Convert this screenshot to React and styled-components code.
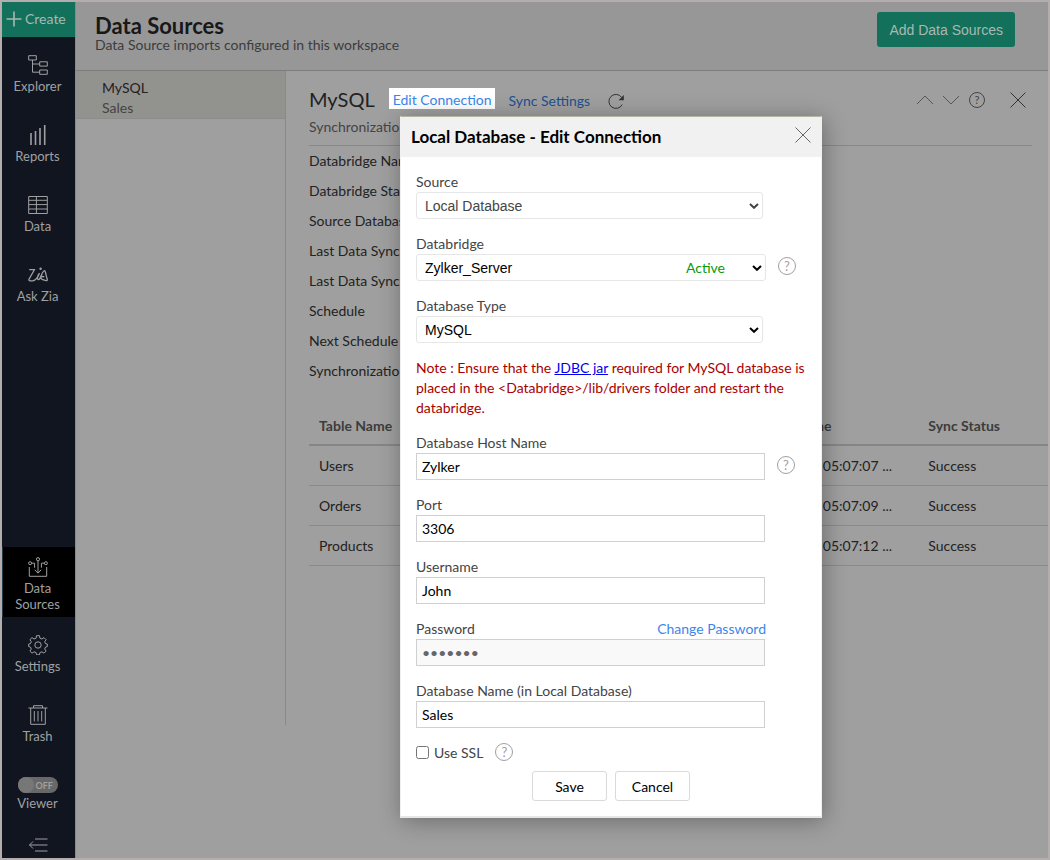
import { useState } from 'react';
import styled, { createGlobalStyle } from 'styled-components';

const tables = [
	{ name: 'Users', time: '19 Apr, 2021 05:07:07 ...', status: 'Success' },
	{ name: 'Orders', time: '19 Apr, 2021 05:07:09 ...', status: 'Success' },
	{ name: 'Products', time: '19 Apr, 2021 05:07:12 ...', status: 'Success' },
];

const details = [
	'Databridge Name',
	'Databridge Status',
	'Source Database',
	'Last Data Sync Time',
	'Last Data Sync Status',
	'Schedule',
	'Next Schedule Time',
	'Synchronization Type',
];

const PlusIcon = () => (
	<Icon width='16' height='16' viewBox='0 0 16 16' strokeWidth='1.6'>
		<path d='M8 0.5v15M0.5 8h15' />
	</Icon>
);

const ExplorerIcon = () => (
	<Icon width='20' height='20' viewBox='0 0 20 20'>
		<path d='M0.7 0.7h7.6v4.3H0.7zM11.7 6.8h7.6v4.3h-7.6zM11.7 15h7.6v4.3h-7.6zM4.5 5v12.2h7.2M4.5 9h7.2' />
	</Icon>
);

const ReportsIcon = () => (
	<Icon width='20' height='20' viewBox='0 0 20 20' strokeWidth='1.6'>
		<path d='M3 20V8M7.5 20V6M12 20V3M16.7 20V0' />
	</Icon>
);

const DataIcon = () => (
	<Icon width='20' height='20' viewBox='0 0 20 20'>
		<path d='M0.7 1.5h18.6v17H0.7zM0.7 5.3h18.6M0.7 9.6h18.6M0.7 14h18.6M8.4 1.5v17' />
	</Icon>
);

const ZiaIcon = () => (
	<Icon width='20' height='20' viewBox='0 0 20 20' strokeWidth='1.3'>
		<path d='M1.200 4.700h5.200L1 14.300q-.4 1.500 1.200 1.500h2.600c3-.5 5.600-4.800 6.700-7.600-1.500 1.800-3 5.200-1.300 6.300 2.200 1.200 3.600-8.600 6.300-8.800 1.300.5 1.500 5.500 2.700 8.300.4 1.400-.4 1.900-1.600 1.500-2.200-.7-5.100-1.200-4.900-2.900.3-1.400 2.200-1.300 3.600-.7' />
		<circle cx='12.600' cy='3.700' r='.6' />
	</Icon>
);

const SourcesIcon = () => (
	<Icon width='20' height='20' viewBox='0 0 20 20'>
		<circle cx='10' cy='2.200' r='1.600' />
		<circle cx='2.100' cy='6.200' r='1.500' />
		<circle cx='17.900' cy='6.200' r='1.500' />
		<path d='M10 3.800v12.200M6.800 12.800l3.200 3.400 3.200-3.400M3.600 6.200h3v4.500M16.400 6.200h-3v4.500M1.300 10v9.300h17.400V10' />
	</Icon>
);

const SettingsIcon = () => (
	<Icon width='20' height='20' viewBox='0 0 20 20' strokeLinejoin='round'>
		<circle cx='10' cy='10' r='3.200' />
		<path d='M8.500 0.700h3l.4 2.500 2 .8 2.100-1.400 2.100 2.100-1.400 2.100.8 1.800 1.800.4v2.600l-1.800.5-.8 1.900 1.400 2.100-2.100 2.100-2.100-1.400-2 .8-.4 2.200h-3l-.4-2.200-2-.8L4 18.200l-2.100-2.100L3.300 14l-.8-1.900-1.800-.5V9l1.800-.4.8-1.800-1.400-2.100L4 2.600 6.100 4l2-.8z' />
	</Icon>
);

const TrashIcon = () => (
	<Icon width='20' height='20' viewBox='0 0 20 20'>
		<path d='M0.500 3h19M5.500 3V0.700h9V3M2.700 3v16.300h14.600V3M6.300 6v10.500M10 6v10.500M13.700 6v10.500' />
	</Icon>
);

const CollapseIcon = () => (
	<Icon width='20' height='14' viewBox='0 0 20 14'>
		<path d='M7 1h12.500M1.500 7h18M7 13h12.500M5 3.500L1.500 7 5 10.500' />
	</Icon>
);

const ReloadIcon = () => (
	<Icon width='16' height='16' viewBox='0 0 16 16'>
		<path d='M14.200 11.500A7 7 0 1 1 13.800 4.600' />
		<path d='M15.800 2v5.200h-5.200z' fill='currentColor' stroke='none' />
	</Icon>
);

const CloseIcon = () => (
	<Icon width='16' height='16' viewBox='0 0 16 16'>
		<path d='M0.500 0.500l15 15M15.500 0.500l-15 15' />
	</Icon>
);

const ChevronIcon = ({ up }) => (
	<Icon width='16' height='16' viewBox='0 0 16 16'>
		<path d={up ? 'M0 12l8-8 8 8' : 'M0 4l8 8 8-8'} />
	</Icon>
);

const ArrowIcon = () => (
	<SelectArrow width='10' height='6' viewBox='0 0 10 6' strokeWidth='2'>
		<path d='M1 1l4 3.800L9 1' />
	</SelectArrow>
);

const HelpButton = ({ small }) => (
	<Help type='button' aria-label='Help' $small={small}>
		?
	</Help>
);

const TextField = ({ id, label, value, help, link, ...rest }) => (
	<Field>
		<LabelRow>
			<label htmlFor={id}>{label}</label>
			{link && <TextLink href='#password'>{link}</TextLink>}
		</LabelRow>
		<ControlRow>
			<TextInput id={id} defaultValue={value} {...rest} />
			{help && <HelpButton />}
		</ControlRow>
	</Field>
);

const SelectField = ({ id, label, value, status, disabled }) => (
	<Field>
		<LabelRow>
			<label htmlFor={id}>{label}</label>
		</LabelRow>
		<ControlRow>
			<SelectBox $wide={Boolean(status)} $disabled={disabled}>
				<Select id={id} defaultValue={value} disabled={disabled}>
					<option>{value}</option>
				</Select>
				{status && <Status>{status}</Status>}
				<ArrowIcon />
			</SelectBox>
			{status && <HelpButton />}
		</ControlRow>
	</Field>
);

const EditConnection = () => {
	const [ssl, setSsl] = useState(false);

	return (
		<Overlay>
			<Dialog role='dialog' aria-labelledby='dialog-title'>
				<DialogHeader>
					<h2 id='dialog-title'>Local Database - Edit Connection</h2>
					<IconButton type='button' aria-label='Close' $color='#666'>
						<CloseIcon />
					</IconButton>
				</DialogHeader>
				<Form onSubmit={e => e.preventDefault()}>
					<SelectField id='source' label='Source' value='Local Database' disabled />
					<SelectField
						id='databridge'
						label='Databridge'
						value='Zylker_Server'
						status='Active'
					/>
					<SelectField id='dbtype' label='Database Type' value='MySQL' />
					<Note>
						Note : Ensure that the <a href='#jdbc'>JDBC jar</a> required for MySQL database is
						placed in the &lt;Databridge&gt;/lib/drivers folder and restart the databridge.
					</Note>
					<TextField id='host' label='Database Host Name' value='Zylker' help />
					<TextField id='port' label='Port' value='3306' />
					<TextField id='username' label='Username' value='John' />
					<TextField
						id='password'
						label='Password'
						type='password'
						value='zylker1'
						link='Change Password'
						disabled
					/>
					<TextField id='dbname' label='Database Name (in Local Database)' value='Sales' />
					<SslRow>
						<Checkbox
							id='ssl'
							type='checkbox'
							checked={ssl}
							onChange={e => setSsl(e.target.checked)}
						/>
						<label htmlFor='ssl'>Use SSL</label>
						<HelpButton />
					</SslRow>
					<Actions>
						<FormButton type='submit'>Save</FormButton>
						<FormButton type='button'>Cancel</FormButton>
					</Actions>
				</Form>
			</Dialog>
		</Overlay>
	);
};

const App = () => (
	<Frame>
		<GlobalStyle />
		<Sidebar>
			<CreateButton type='button'>
				<PlusIcon />
				Create
			</CreateButton>
			<NavItem href='#explorer'>
				<ExplorerIcon />
				Explorer
			</NavItem>
			<NavItem href='#reports'>
				<ReportsIcon />
				Reports
			</NavItem>
			<NavItem href='#data'>
				<DataIcon />
				Data
			</NavItem>
			<NavItem href='#zia'>
				<ZiaIcon />
				Ask Zia
			</NavItem>
			<Spacer />
			<NavItem href='#sources' $active>
				<SourcesIcon />
				Data Sources
			</NavItem>
			<NavItem href='#settings'>
				<SettingsIcon />
				Settings
			</NavItem>
			<NavItem href='#trash'>
				<TrashIcon />
				Trash
			</NavItem>
			<Viewer>
				<Toggle type='button' role='switch' aria-checked='false' aria-labelledby='viewer'>
					<Knob />
					OFF
				</Toggle>
				<span id='viewer'>Viewer</span>
			</Viewer>
			<CollapseButton type='button' aria-label='Collapse sidebar'>
				<CollapseIcon />
			</CollapseButton>
		</Sidebar>
		<Main>
			<Header>
				<div>
					<h1>Data Sources</h1>
					<p>Data Source imports configured in this workspace</p>
				</div>
				<AddButton type='button'>Add Data Sources</AddButton>
			</Header>
			<Body>
				<SourceList>
					<SourceItem href='#mysql'>
						<strong>MySQL</strong>
						<span>Sales</span>
					</SourceItem>
				</SourceList>
				<Detail>
					<DetailHeader>
						<TitleRow>
							<h2>MySQL</h2>
							<HighlightLink href='#edit'>Edit Connection</HighlightLink>
							<SyncTools>
								<SyncLink href='#sync'>Sync Settings</SyncLink>
								<IconButton type='button' aria-label='Refresh' $color='#333'>
									<ReloadIcon />
								</IconButton>
							</SyncTools>
							<Tools>
								<IconButton type='button' aria-label='Previous' $color='#555'>
									<ChevronIcon up />
								</IconButton>
								<IconButton type='button' aria-label='Next' $color='#555'>
									<ChevronIcon />
								</IconButton>
								<HelpButton small />
								<IconButton type='button' aria-label='Close' $color='#333' $spaced>
									<CloseIcon />
								</IconButton>
							</Tools>
						</TitleRow>
						<p>Synchronization</p>
					</DetailHeader>
					<DetailList>
						{details.map(item => (
							<li key={item}>{item}</li>
						))}
					</DetailList>
					<Table>
						<colgroup>
							<col width='56%' />
							<col width='27%' />
							<col />
						</colgroup>
						<thead>
							<tr>
								<th>Table Name</th>
								<th>Last Sync Time</th>
								<th>Sync Status</th>
							</tr>
						</thead>
						<tbody>
							{tables.map(({ name, time, status }) => (
								<tr key={name}>
									<td>{name}</td>
									<td>{time}</td>
									<td>{status}</td>
								</tr>
							))}
						</tbody>
					</Table>
				</Detail>
			</Body>
		</Main>
		<EditConnection />
	</Frame>
);

const GlobalStyle = createGlobalStyle`
	*, *::before, *::after {
		box-sizing: border-box;
	}
	body {
		margin: 0;
		font: 14px/20px Lato, sans-serif;
		color: #222;
	}
	h1, h2, p, ul {
		margin: 0;
		padding: 0;
	}
	button, input {
		font-family: inherit;
	}
`;

const Frame = styled.div`
	position: relative;
	display: flex;
	min-height: 100vh;
	border: 2px solid #b3adad;
	background: #9f9f9f;
`;

const Icon = styled.svg`
	display: block;
	flex: none;
	fill: none;
	stroke: currentColor;
`;

const IconButton = styled.button`
	padding: 0;
	margin-left: ${props => (props.$spaced ? '15px' : '0')};
	border: 0;
	background: none;
	color: ${props => props.$color};
`;

const Help = styled.button`
	flex: none;
	width: ${props => (props.$small ? '16px' : '18px')};
	height: ${props => (props.$small ? '16px' : '18px')};
	padding: 0;
	border: 1px solid ${props => (props.$small ? '#444' : '#a0a0a0')};
	border-radius: 50%;
	background: none;
	color: ${props => (props.$small ? '#444' : '#a0a0a0')};
	font-size: ${props => (props.$small ? '11px' : '13px')};
	line-height: 14px;
	text-align: center;
`;

const Sidebar = styled.nav`
	display: flex;
	flex: none;
	flex-direction: column;
	width: 73px;
	background: #111520;
	color: #a0a0a2;
`;

const CreateButton = styled.button`
	display: flex;
	align-items: center;
	gap: 3px;
	height: 35px;
	padding: 0 4px 2px;
	border: 0;
	background: #12705b;
	color: #a9b8b3;
	font-size: 14px;
`;

const NavItem = styled.a`
	display: flex;
	flex-direction: column;
	align-items: center;
	gap: 3px;
	height: 70px;
	padding: ${props => (props.$active ? '10px 10px 0 7px' : '18px 2px 0 0')};
	border-left: ${props => (props.$active ? '1px solid #21394a' : '0')};
	background: ${props => (props.$active ? '#000' : 'none')};
	color: inherit;
	font-size: 13px;
	line-height: 16px;
	text-align: center;
	text-decoration: none;
`;

const Spacer = styled.div`
	flex: 1;
`;

const Viewer = styled.div`
	display: flex;
	flex-direction: column;
	align-items: center;
	gap: 2px;
	padding: 20px 2px 0 0;
	font-size: 13px;
	line-height: 16px;
`;

const Toggle = styled.button`
	display: flex;
	align-items: center;
	gap: 2px;
	width: 40px;
	height: 16px;
	padding: 0;
	border: 0;
	border-radius: 8px;
	background: #686868;
	color: #a0a0a0;
	font-size: 9px;
	font-weight: bold;
`;

const Knob = styled.span`
	width: 16px;
	height: 16px;
	border-radius: 50%;
	background: #777;
`;

const CollapseButton = styled.button`
	display: flex;
	justify-content: center;
	padding: 27px 2px 6px 0;
	border: 0;
	background: none;
	color: inherit;
`;

const Main = styled.main`
	flex: 1;
	min-width: 0;
	border-left: 1px solid #8a8a8a;
`;

const Header = styled.header`
	display: flex;
	justify-content: space-between;
	height: 69px;
	padding: 10px 33px 0 19px;
	border-bottom: 1px solid #7c7c7c;
	background: #979797;

	h1 {
		margin-top: 3px;
		color: #181818;
		font-size: 22px;
		line-height: 22px;
	}
	p {
		color: #3c3c3c;
		line-height: 16px;
	}
`;

const AddButton = styled.button`
	height: 35px;
	padding: 0 12px;
	border: 0;
	border-radius: 3px;
	background: #12705b;
	color: #a9b8b3;
	font: 14px 'Liberation Sans', sans-serif;
`;

const Body = styled.div`
	display: flex;
	align-items: flex-start;
`;

const SourceList = styled.aside`
	flex: none;
	width: 210px;
	min-height: 654px;
	border-right: 1px solid #8a8a8a;
`;

const SourceItem = styled.a`
	display: block;
	height: 48px;
	padding: 7px 26px 0;
	border-bottom: 1px solid #8c8c8a;
	background: #92928f;
	color: #444;
	text-decoration: none;

	strong {
		display: block;
		color: #222;
		font-weight: normal;
	}
	span {
		display: block;
	}
`;

const Detail = styled.section`
	flex: 1;
	min-width: 0;
	padding: 17px 0 0 23px;
`;

const DetailHeader = styled.div`
	height: 58px;
	margin-right: 16px;
	border-bottom: 1px solid #888;

	p {
		margin-top: 8px;
		color: #444;
	}
`;

const TitleRow = styled.div`
	display: flex;
	align-items: center;
	height: 21px;

	h2 {
		margin-right: 14px;
		font-size: 20px;
		font-weight: normal;
	}
`;

const TextLink = styled.a`
	color: #3c86ea;
	text-decoration: none;
`;

const HighlightLink = styled(TextLink)`
	height: 21px;
	padding: 3px 3px 0 4px;
	background: #fff;
	line-height: 18px;
`;

const SyncTools = styled.div`
	display: flex;
	align-items: center;
	gap: 18px;
	padding: 4px 0 0 14px;
`;

const SyncLink = styled(TextLink)`
	color: #224f8d;
`;

const Tools = styled.div`
	display: flex;
	align-items: center;
	gap: 10px;
	margin: 0 6px 0 auto;
	padding-top: 2px;
`;

const DetailList = styled.ul`
	width: fit-content;
	list-style: none;
	line-height: 30px;
`;

const Table = styled.table`
	width: 100%;
	margin-top: 19px;
	border-collapse: collapse;
	table-layout: fixed;

	th, td {
		height: 40px;
		padding: 2px 10px 0;
		border-bottom: 1px solid #8a8a8a;
		text-align: left;
	}
	th {
		border-bottom: 2px solid #868686;
		color: #3c3c3c;
	}
	th:nth-child(2), td:nth-child(2) {
		padding-left: 16px;
	}
	th:last-child, td:last-child {
		padding-left: 6px;
	}
`;

const Overlay = styled.div`
	position: absolute;
	inset: 0;
	padding: 114px 0 0 398px;
`;

const Dialog = styled.section`
	width: 422px;
	border: 1px solid #f0f0f0;
	border-top-color: #b5b5a5;
	border-bottom: 2px solid #e6e6e6;
	background: #fff;
	box-shadow: 2px 3px 22px rgba(0, 0, 0, 0.32);
`;

const DialogHeader = styled.div`
	display: flex;
	align-items: center;
	justify-content: space-between;
	height: 40px;
	padding: 0 10px;
	background: #f1f1f1;

	h2 {
		color: #000;
		font-size: 17px;
	}
	button {
		margin-bottom: 4px;
	}
`;

const Form = styled.form`
	display: flex;
	flex-direction: column;
	gap: 15px;
	padding: 15px;
	color: #444;
`;

const Field = styled.div`
	display: flex;
	flex-direction: column;
`;

const LabelRow = styled.div`
	display: flex;
	justify-content: space-between;
	width: 350px;
`;

const ControlRow = styled.div`
	display: flex;
	align-items: center;
	gap: 12px;

	button {
		margin-bottom: 3px;
	}
`;

const TextInput = styled.input`
	width: 349px;
	height: 27px;
	padding: 0 5px;
	border: 1px solid #d0d0d0;
	background: #fff;
	color: #000;
	font-size: 14px;

	&:disabled {
		background: #f9f9f9;
		color: #666;
	}
`;

const SelectBox = styled.div`
	display: grid;
	width: ${props => (props.$wide ? '350px' : '347px')};
	color: ${props => (props.$disabled ? '#444' : '#000')};
`;

const Select = styled.select`
	grid-area: 1 / 1;
	height: 27px;
	padding: 0 8px;
	border: 1px solid #e6e6e6;
	border-radius: 3px;
	appearance: none;
	background: #fff;
	color: inherit;
	font: 14px 'Liberation Sans', sans-serif;
	opacity: 1;
`;

const SelectArrow = styled(Icon)`
	grid-area: 1 / 1;
	place-self: center end;
	margin-right: 4px;
	pointer-events: none;
`;

const Status = styled.span`
	grid-area: 1 / 1;
	place-self: center end;
	margin-right: 41px;
	color: #0a9a0a;
	pointer-events: none;
`;

const Note = styled.p`
	color: #a80000;

	a {
		color: #00e;
	}
`;

const SslRow = styled.div`
	display: flex;
	align-items: center;
	height: 19px;

	label {
		margin: 0 12px 0 5px;
	}
	button {
		margin-bottom: 2px;
	}
`;

const Checkbox = styled.input`
	width: 13px;
	height: 13px;
	margin: 0;
`;

const Actions = styled.div`
	display: flex;
	justify-content: center;
	gap: 8px;
	margin-top: -6px;
`;

const FormButton = styled.button`
	width: 75px;
	height: 30px;
	border: 1px solid #dadada;
	border-radius: 3px;
	background: #fff;
	color: #000;
	font-size: 14px;
`;

export default App;
